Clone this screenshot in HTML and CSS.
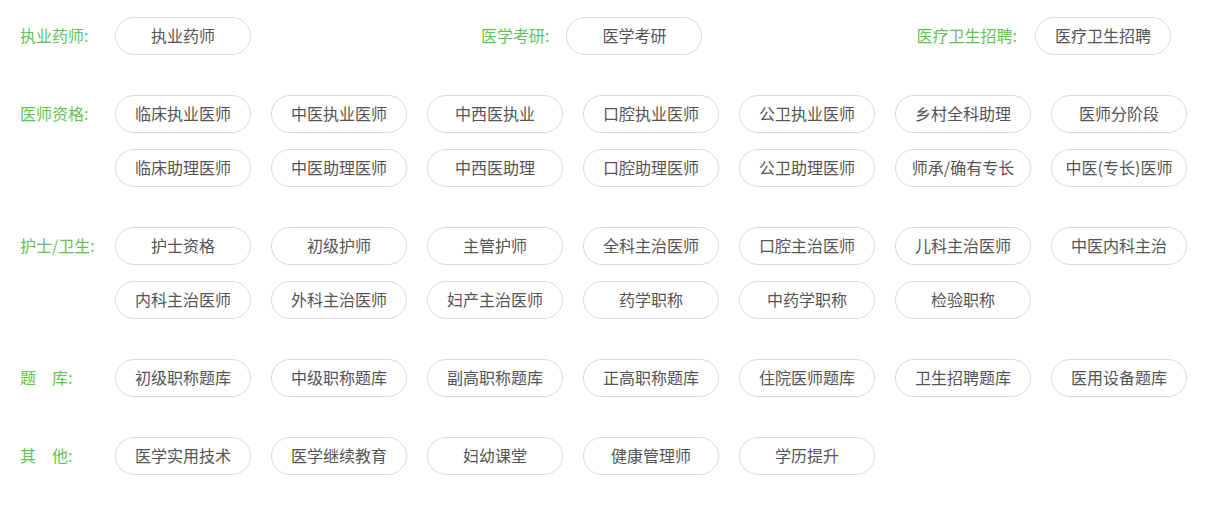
FILE: index.html
```html
<!DOCTYPE html>
<html lang="zh-CN">
<head>
<meta charset="utf-8">
<title>分类导航</title>
<link rel="stylesheet" href="styles.css">
</head>
<body>
<div class="nav">
  <div class="section top">
    <div class="group g1">
      <span class="label">执业药师:</span>
      <a class="pill">执业药师</a>
    </div>
    <div class="group g2">
      <span class="label auto">医学考研:</span>
      <a class="pill">医学考研</a>
    </div>
    <div class="group g3">
      <span class="label auto">医疗卫生招聘:</span>
      <a class="pill">医疗卫生招聘</a>
    </div>
  </div>

  <div class="section">
    <span class="label">医师资格:</span>
    <div class="items">
      <a class="pill">临床执业医师</a>
      <a class="pill">中医执业医师</a>
      <a class="pill">中西医执业</a>
      <a class="pill">口腔执业医师</a>
      <a class="pill">公卫执业医师</a>
      <a class="pill">乡村全科助理</a>
      <a class="pill">医师分阶段</a>
      <a class="pill">临床助理医师</a>
      <a class="pill">中医助理医师</a>
      <a class="pill">中西医助理</a>
      <a class="pill">口腔助理医师</a>
      <a class="pill">公卫助理医师</a>
      <a class="pill">师承/确有专长</a>
      <a class="pill">中医(专长)医师</a>
    </div>
  </div>

  <div class="section">
    <span class="label">护士/卫生:</span>
    <div class="items">
      <a class="pill">护士资格</a>
      <a class="pill">初级护师</a>
      <a class="pill">主管护师</a>
      <a class="pill">全科主治医师</a>
      <a class="pill">口腔主治医师</a>
      <a class="pill">儿科主治医师</a>
      <a class="pill">中医内科主治</a>
      <a class="pill">内科主治医师</a>
      <a class="pill">外科主治医师</a>
      <a class="pill">妇产主治医师</a>
      <a class="pill">药学职称</a>
      <a class="pill">中药学职称</a>
      <a class="pill">检验职称</a>
    </div>
  </div>

  <div class="section">
    <span class="label">题<span class="sp"></span>库:</span>
    <div class="items">
      <a class="pill">初级职称题库</a>
      <a class="pill">中级职称题库</a>
      <a class="pill">副高职称题库</a>
      <a class="pill">正高职称题库</a>
      <a class="pill">住院医师题库</a>
      <a class="pill">卫生招聘题库</a>
      <a class="pill">医用设备题库</a>
    </div>
  </div>

  <div class="section">
    <span class="label">其<span class="sp"></span>他:</span>
    <div class="items">
      <a class="pill">医学实用技术</a>
      <a class="pill">医学继续教育</a>
      <a class="pill">妇幼课堂</a>
      <a class="pill">健康管理师</a>
      <a class="pill">学历提升</a>
    </div>
  </div>
</div>
</body>
</html>
```

FILE: styles.css
```css
html, body {
  margin: 0;
  padding: 0;
  background: #fff;
}
body {
  font-family: "Noto Sans CJK SC", "Noto Sans", sans-serif;
  font-size: 16px;
  color: #555;
}
.nav {
  padding: 17px 0 0 20px;
}
.section {
  display: flex;
  align-items: flex-start;
  margin-bottom: 40px;
}
.label {
  flex: none;
  width: 95px;
  height: 38px;
  line-height: 36px;
  color: #62c454;
  white-space: nowrap;
}
.label.auto {
  width: auto;
}
.sp {
  display: inline-block;
  width: 16px;
}
.items {
  display: flex;
  flex-wrap: wrap;
  gap: 16px 20px;
  width: 1072px;
}
.pill {
  box-sizing: border-box;
  width: 136px;
  height: 38px;
  line-height: 34px;
  border: 1px solid #d9d9d9;
  border-radius: 19px;
  text-align: center;
  color: #555;
  text-decoration: none;
  white-space: nowrap;
}
.group {
  display: flex;
  align-items: flex-start;
}
.g2 {
  margin-left: 230px;
}
.g2 .label {
  margin-right: 17px;
}
.g3 {
  margin-left: 214px;
}
.g3 .label {
  margin-right: 18px;
}
```
